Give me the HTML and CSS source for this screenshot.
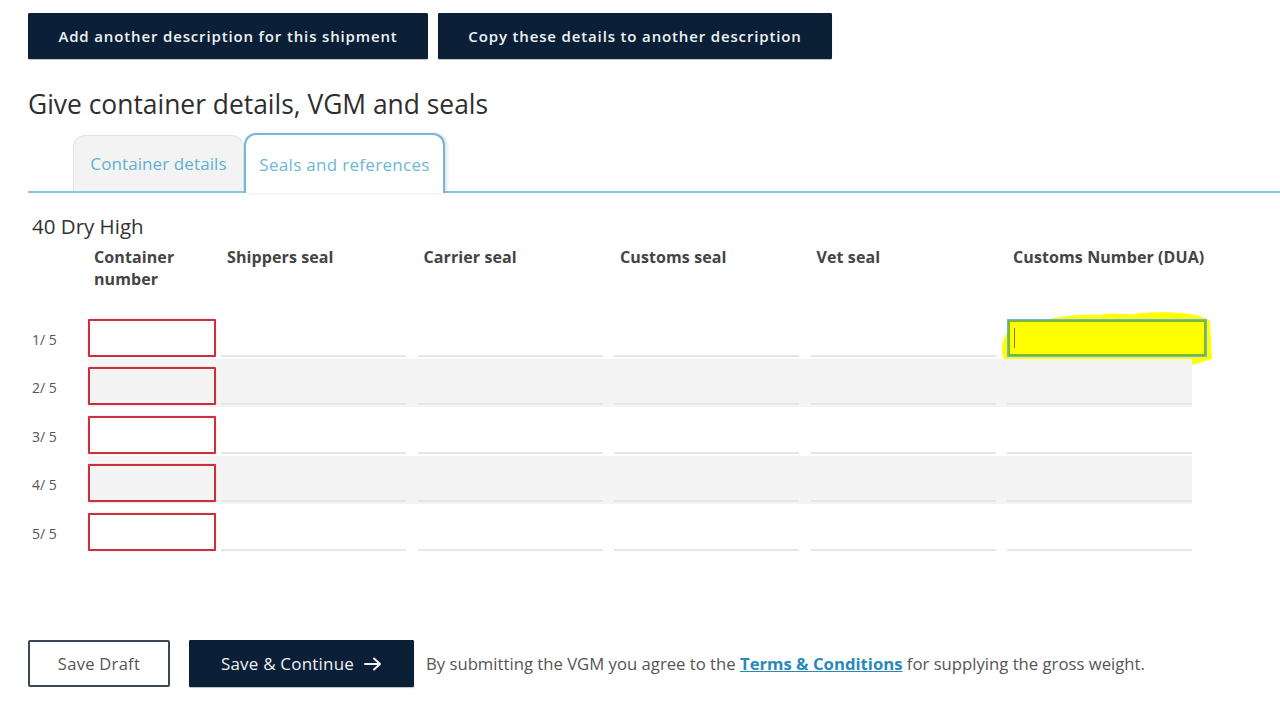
FILE: index.html
```html
<!DOCTYPE html>
<html lang="en">
<head>
<meta charset="utf-8">
<title>Give container details, VGM and seals</title>
<link rel="stylesheet" href="styles.css">
</head>
<body>
<div class="page">
  <div class="top-actions">
    <button class="btn btn-dark btn-add">Add another description for this shipment</button>
    <button class="btn btn-dark btn-copy">Copy these details to another description</button>
  </div>

  <h1 class="title">Give container details, VGM and seals</h1>

  <div class="tabs">
    <div class="tab tab-inactive">Container details</div>
    <div class="tab tab-active">Seals and references</div>
  </div>

  <div class="group-name">40 Dry High</div>

  <div class="seal-table">
    <div class="head-row">
      <div class="cell-label"></div>
      <div class="head head-container">Container<br>number</div>
      <div class="head">Shippers seal</div>
      <div class="head">Carrier seal</div>
      <div class="head">Customs seal</div>
      <div class="head">Vet seal</div>
      <div class="head">Customs Number (DUA)</div>
    </div>

    <div class="row">
      <div class="cell-label">1/ 5</div>
      <div class="cell-container"><div class="box-red"></div></div>
      <div class="cell"><div class="line-input"></div></div>
      <div class="cell"><div class="line-input"></div></div>
      <div class="cell"><div class="line-input"></div></div>
      <div class="cell"><div class="line-input"></div></div>
      <div class="cell cell-focus">
        <svg class="highlight" viewBox="0 0 214 70" width="214" height="70" aria-hidden="true">
          <path d="M8 22 C30 14 60 4 100 6 C118 2 126 8 140 4 C170 2 200 4 210 12 L212 50 C190 58 160 62 130 60 C110 68 80 70 66 64 C40 60 12 58 4 50 C0 42 2 30 8 22 Z" fill="#ffff00"/>
        </svg>
        <div class="box-focus"><span class="caret"></span></div>
      </div>
    </div>

    <div class="row row-alt">
      <div class="cell-label">2/ 5</div>
      <div class="cell-container"><div class="box-red"></div></div>
      <div class="cell"><div class="line-input"></div></div>
      <div class="cell"><div class="line-input"></div></div>
      <div class="cell"><div class="line-input"></div></div>
      <div class="cell"><div class="line-input"></div></div>
      <div class="cell"><div class="line-input"></div></div>
    </div>

    <div class="row">
      <div class="cell-label">3/ 5</div>
      <div class="cell-container"><div class="box-red"></div></div>
      <div class="cell"><div class="line-input"></div></div>
      <div class="cell"><div class="line-input"></div></div>
      <div class="cell"><div class="line-input"></div></div>
      <div class="cell"><div class="line-input"></div></div>
      <div class="cell"><div class="line-input"></div></div>
    </div>

    <div class="row row-alt">
      <div class="cell-label">4/ 5</div>
      <div class="cell-container"><div class="box-red"></div></div>
      <div class="cell"><div class="line-input"></div></div>
      <div class="cell"><div class="line-input"></div></div>
      <div class="cell"><div class="line-input"></div></div>
      <div class="cell"><div class="line-input"></div></div>
      <div class="cell"><div class="line-input"></div></div>
    </div>

    <div class="row">
      <div class="cell-label">5/ 5</div>
      <div class="cell-container"><div class="box-red"></div></div>
      <div class="cell"><div class="line-input"></div></div>
      <div class="cell"><div class="line-input"></div></div>
      <div class="cell"><div class="line-input"></div></div>
      <div class="cell"><div class="line-input"></div></div>
      <div class="cell"><div class="line-input"></div></div>
    </div>
  </div>

  <div class="bottom-actions">
    <button class="btn btn-outline">Save Draft</button>
    <button class="btn btn-dark btn-continue">Save &amp; Continue
      <svg class="arrow" viewBox="0 0 18 14" width="18" height="14" aria-hidden="true">
        <path d="M1 7 H16 M10 1.5 L16 7 L10 12.5" fill="none" stroke="#eef2f5" stroke-width="2" stroke-linecap="round" stroke-linejoin="round"/>
      </svg>
    </button>
    <p class="terms">By submitting the VGM you agree to the <a href="#" class="terms-link">Terms &amp; Conditions</a> for supplying the gross weight.</p>
  </div>
</div>
</body>
</html>
```

FILE: styles.css
```css
* { box-sizing: border-box; }

html, body {
  margin: 0;
  padding: 0;
  background: #ffffff;
}

body {
  font-family: "Open Sans", "Liberation Sans", sans-serif;
  color: #3a3a3a;
  width: 1280px;
  height: 720px;
  overflow: hidden;
}

.page {
  padding: 13px 0 0 28px;
}

/* buttons */
.btn {
  font-family: "Open Sans", "Liberation Sans", sans-serif;
  font-size: 15px;
  font-weight: 600;
  border-radius: 1px;
  cursor: pointer;
  height: 46px;
  padding: 0;
}

.btn-dark {
  background: #0b2036;
  color: #eef2f5;
  border: 1px solid #0b2036;
  box-shadow: 0 1px 1px rgba(0,0,0,0.25);
}

.top-actions {
  display: flex;
  gap: 10px;
}

.btn-add { width: 400px; letter-spacing: 0.85px; }
.btn-copy { width: 394px; letter-spacing: 0.85px; }

.title {
  margin: 28px 0 0 0;
  font-size: 26.4px;
  line-height: 35px;
  font-weight: 400;
  color: #2e2e2e;
}

/* tabs */
.tabs {
  display: flex;
  align-items: flex-end;
  padding-left: 45px;
  margin-top: 13px;
  border-bottom: 2px solid #86c6dc;
  height: 58px;
}

.tab {
  display: flex;
  align-items: center;
  justify-content: center;
  font-size: 17px;
  color: #5fb1d2;
  border-radius: 12px 12px 0 0;
}

.tab-inactive {
  width: 171px;
  height: 56px;
  background: #f3f3f3;
  border: 1px solid #e2e2e2;
  border-bottom: none;
  letter-spacing: 0.1px;
}

.tab-active {
  width: 201px;
  height: 60px;
  background: #ffffff;
  border: 2px solid #6fbad6;
  border-bottom: none;
  margin-bottom: -2px;
  box-shadow: 2px 0 3px rgba(0,0,0,0.12);
  color: #6cb8d6;
  letter-spacing: 0.3px;
}

.group-name {
  margin: 19px 0 0 4px;
  font-size: 20.5px;
  line-height: 28px;
  color: #333;
}

/* table */
.seal-table {
  margin-top: 6px;
  width: 1180px;
}

.head-row,
.row {
  display: grid;
  grid-template-columns: 60px 133px repeat(5, 196.5px);
}

.head-row {
  height: 64px;
}

.head {
  font-size: 16px;
  font-weight: 700;
  line-height: 22px;
  color: #444;
  padding-left: 6px;
  letter-spacing: 0.1px;
  white-space: nowrap;
}

.row {
  height: 48.5px;
  align-items: end;
  position: relative;
}

.row-alt .cell-container,
.row-alt .cell {
  background: #f4f4f4;
}

.row-alt .cell:last-child {
  background: linear-gradient(to right, #f4f4f4 185px, transparent 185px);
}

.cell-label {
  align-self: center;
  padding-left: 4px;
  padding-top: 10px;
  font-size: 14px;
  color: #555;
}

.cell-container {
  height: 100%;
  display: flex;
  align-items: flex-end;
  padding-bottom: 2px;
}

.box-red {
  flex-shrink: 0;
  width: 128px;
  height: 38px;
  border: 2px solid #c7303c;
  border-radius: 1px;
  box-shadow: 0 0 1px rgba(200,48,60,0.6);
}

.cell {
  height: 100%;
  display: flex;
  align-items: flex-end;
  padding-bottom: 2px;
}

.line-input {
  width: 185px;
  height: 2px;
  background: #e6e6e6;
}

.cell-focus {
  position: relative;
  background: transparent;
}

.highlight {
  position: absolute;
  left: -7px;
  top: -1px;
  z-index: 0;
}

.box-focus {
  position: relative;
  z-index: 1;
  flex-shrink: 0;
  width: 200px;
  height: 38px;
  border: 1px solid #6ab6e4;
  box-shadow: inset 0 0 0 2px #78b83a;
  background: #ffff00;
  display: flex;
  align-items: center;
  padding-left: 6px;
}

.caret {
  display: block;
  width: 1px;
  height: 20px;
  background: #9a6a2a;
}

/* bottom */
.bottom-actions {
  display: flex;
  align-items: center;
  margin-top: 87px;
  gap: 19px;
}

.btn-outline {
  width: 142px;
  height: 47px;
  background: #ffffff;
  color: #555;
  font-weight: 400;
  font-size: 16.5px;
  border: 2px solid #3a4858;
  border-radius: 2px;
  letter-spacing: 0.3px;
}

.btn-continue {
  width: 225px;
  height: 47px;
  font-size: 17px;
  font-weight: 400;
  letter-spacing: 0.2px;
  display: flex;
  align-items: center;
  justify-content: center;
  gap: 10px;
}

.arrow {
  display: block;
  margin-top: 1px;
}

.terms {
  margin: 0 0 0 -7px;
  font-size: 16.7px;
  color: #555;
  letter-spacing: 0;
}

.terms-link {
  color: #2a88ba;
  font-weight: 700;
  text-decoration: underline;
}
```
